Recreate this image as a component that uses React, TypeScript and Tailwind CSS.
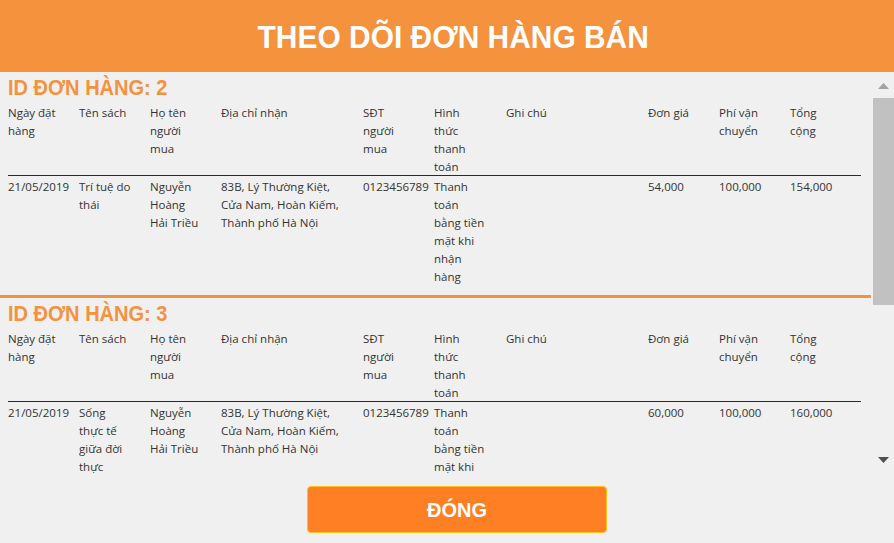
import React from "react";

type Order = {
  id: number;
  date: string;
  book: string[];
  name: string[];
  addr: string[];
  phone: string;
  pay: string[];
  note: string;
  price: string;
  ship: string;
  total: string;
};

const orders: Order[] = [
  {
    id: 2,
    date: "21/05/2019",
    book: ["Trí tuệ do", "thái"],
    name: ["Nguyễn", "Hoàng", "Hải Triều"],
    addr: ["83B, Lý Thường Kiệt,", "Cửa Nam, Hoàn Kiếm,", "Thành phố Hà Nội"],
    phone: "0123456789",
    pay: ["Thanh", "toán", "bằng tiền", "mặt khi", "nhận", "hàng"],
    note: "",
    price: "54,000",
    ship: "100,000",
    total: "154,000",
  },
  {
    id: 3,
    date: "21/05/2019",
    book: ["Sống", "thực tế", "giữa đời", "thực"],
    name: ["Nguyễn", "Hoàng", "Hải Triều"],
    addr: ["83B, Lý Thường Kiệt,", "Cửa Nam, Hoàn Kiếm,", "Thành phố Hà Nội"],
    phone: "0123456789",
    pay: ["Thanh", "toán", "bằng tiền", "mặt khi", "nhận", "hàng"],
    note: "",
    price: "60,000",
    ship: "100,000",
    total: "160,000",
  },
];

const headers: string[][] = [
  ["Ngày đặt", "hàng"],
  ["Tên sách"],
  ["Họ tên", "người", "mua"],
  ["Địa chỉ nhận"],
  ["SĐT", "người", "mua"],
  ["Hình", "thức", "thanh", "toán"],
  ["Ghi chú"],
  ["Đơn giá"],
  ["Phí vận", "chuyển"],
  ["Tổng", "cộng"],
];

const gridCls =
  "grid grid-cols-[71px_71px_71px_142px_71px_72px_142px_71px_71px_71px] w-[853px]";

function Cell({ lines }: { lines: string[] }) {
  return (
    <div className="flex flex-col">
      {lines.map((l, i) => (
        <div key={i} className="whitespace-nowrap">
          {l}
        </div>
      ))}
    </div>
  );
}

function Section({ o, first }: { o: Order; first: boolean }) {
  const cells: string[][] = [
    [o.date],
    o.book,
    o.name,
    o.addr,
    [o.phone],
    o.pay,
    o.note ? [o.note] : [],
    [o.price],
    [o.ship],
    [o.total],
  ];
  return (
    <div className="flex flex-col">
      {!first && <div className="h-[3px] w-[871px] bg-[#f5923e]" />}
      <div className="pt-[1px] px-[8px]">
        <div className="h-[29px] leading-[29px] text-[22px] font-bold text-[#f5923e] font-['Liberation_Sans',Arial,sans-serif] whitespace-nowrap">
          <span className="inline-block origin-left scale-x-[0.91]">
            ID ĐƠN HÀNG: {o.id}
          </span>
        </div>
        <div className={`${gridCls} mt-[1px] pt-[1px] h-[73px] border-b border-[#2a2a2a]`}>
          {headers.map((h, i) => (
            <Cell key={i} lines={h} />
          ))}
        </div>
        <div className={`${gridCls} pt-[2px] pb-[9px]`}>
          {cells.map((c, i) => (
            <Cell key={i} lines={c} />
          ))}
        </div>
      </div>
    </div>
  );
}

export default function App() {
  return (
    <div className="w-[894px] h-[543px] bg-[#f0f0f0] flex flex-col overflow-hidden">
      <div className="h-[72px] bg-[#f5923e] flex items-center justify-center pl-[12px]">
        <div className="pt-[1px] text-[32px] leading-[32px] font-bold text-white font-['Liberation_Sans',Arial,sans-serif] whitespace-nowrap">
          <span className="inline-block scale-x-[0.935]">THEO DÕI ĐƠN HÀNG BÁN</span>
        </div>
      </div>
      <div className="flex h-[402px]">
        <div className="w-[873px] h-[402px] overflow-hidden text-[11.5px] leading-[18px] text-[#333333] font-['Open_Sans','Noto_Sans',sans-serif]">
          {orders.map((o, i) => (
            <Section key={o.id} o={o} first={i === 0} />
          ))}
        </div>
        <div className="w-[21px] h-[402px] flex flex-col">
          <div className="h-[26px] flex items-center justify-center pt-[1px]">
            <svg width="11" height="6" viewBox="0 0 11 6">
              <polygon points="5.5,0 11,6 0,6" fill="#a3a3a3" />
            </svg>
          </div>
          <div className="h-[207px] bg-[#c1c1c1]" />
          <div className="flex-1" />
          <div className="h-[26px] flex items-center justify-center pb-[3px]">
            <svg width="11" height="6" viewBox="0 0 11 6">
              <polygon points="0,0 11,0 5.5,6" fill="#505050" />
            </svg>
          </div>
        </div>
      </div>
      <div className="flex justify-center pl-[20px] mt-[12px]">
        <button className="w-[300px] h-[47px] rounded-[4px] border border-[#ffc21a] bg-[#ff8024] text-white text-[20px] font-bold font-['Liberation_Sans',Arial,sans-serif] flex items-center justify-center">
          ĐÓNG
        </button>
      </div>
    </div>
  );
}
